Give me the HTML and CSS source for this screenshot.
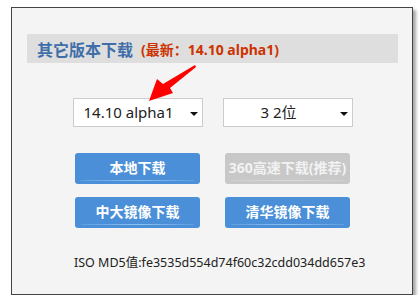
FILE: index.html
```html
<!DOCTYPE html>
<html lang="zh-CN">
<head>
  <meta charset="UTF-8" />
  <title>其它版本下载</title>
  <link rel="stylesheet" href="styles.css">
</head>
<body>

  <div class="panel">
    <div class="panel-head">
      <h2>其它版本下载</h2>
      <span class="latest">(最新：14.10 alpha1)</span>
    </div>

    <div class="selects">
      <div class="select">14.10 alpha1<span class="caret"></span></div>
      <div class="select">3 2位<span class="caret"></span></div>
      <svg class="pointer" width="50" height="40" viewBox="0 0 50 40">
        <polygon points="47,0 48,2 22,23 25,28 1,36 9,14 15,19" fill="#f00" />
      </svg>
    </div>

    <div class="buttons">
      <a class="btn">本地下载</a>
      <a class="btn disabled">360高速下载(推荐)</a>
      <a class="btn">中大镜像下载</a>
      <a class="btn">清华镜像下载</a>
    </div>

    <p class="md5">ISO MD5值:fe3535d554d74f60c32cdd034dd657e3</p>
  </div>

</body>
</html>
```

FILE: styles.css
```css
* {
  box-sizing: border-box;
  margin: 0;
  padding: 0;
}

body {
  background: #fff;
  font-family: "Noto Sans", "Noto Sans CJK SC", sans-serif;
  color: #222;
}

.panel {
  width: 402px;
  height: 288px;
  margin: 7px 0 0 11px;
  border: 1px solid #444;
  background: #f4f4f4;
  box-shadow: 3px 3px 3px rgba(0,0,0,0.35);
  padding: 26px 14px 0 15px;
}

.panel-head {
  height: 29px;
  background: #dedede;
  padding-left: 10px;
  display: flex;
  align-items: center;
  gap: 8px;
}

.panel-head h2 {
  font-size: 16px;
  font-weight: bold;
  color: #3f6ea9;
}

.latest {
  font-size: 14px;
  font-weight: bold;
  color: #cc3300;
}

.selects {
  position: relative;
  display: flex;
  justify-content: center;
  gap: 20px;
  margin-top: 35px;
}

.select {
  position: relative;
  width: 130px;
  height: 29px;
  background: #fff;
  border: 1px solid #ccc;
  font-size: 15px;
  line-height: 27px;
  text-align: center;
  padding-right: 18px;
}

.caret {
  position: absolute;
  right: 4px;
  top: 13px;
  border-left: 4px solid transparent;
  border-right: 4px solid transparent;
  border-top: 4px solid #111;
}

.pointer {
  position: absolute;
  left: 121px;
  top: -33px;
}

.buttons {
  display: grid;
  grid-template-columns: 125px 125px;
  justify-content: center;
  column-gap: 25px;
  row-gap: 13px;
  margin-top: 26px;
}

.btn {
  position: relative;
  display: block;
  height: 31px;
  line-height: 30px;
  background: #4a8fd7;
  border-radius: 3px;
  color: #fff;
  font-size: 14px;
  font-weight: bold;
  text-align: center;
  cursor: pointer;
}

.btn::after {
  content: "";
  position: absolute;
  left: 6px;
  right: 6px;
  bottom: 3px;
  height: 1px;
  background: linear-gradient(to right, rgba(140,195,240,0.3), #8cc3f0, rgba(140,195,240,0.3));
}

.btn.disabled {
  background: #c8c8c8;
  color: #f2f2f2;
  cursor: default;
}

.btn.disabled::after {
  background: linear-gradient(to right, rgba(220,220,220,0.3), #dcdcdc, rgba(220,220,220,0.3));
}

.md5 {
  margin-top: 24px;
  padding-left: 47px;
  font-size: 12.5px;
  color: #222;
}
```
